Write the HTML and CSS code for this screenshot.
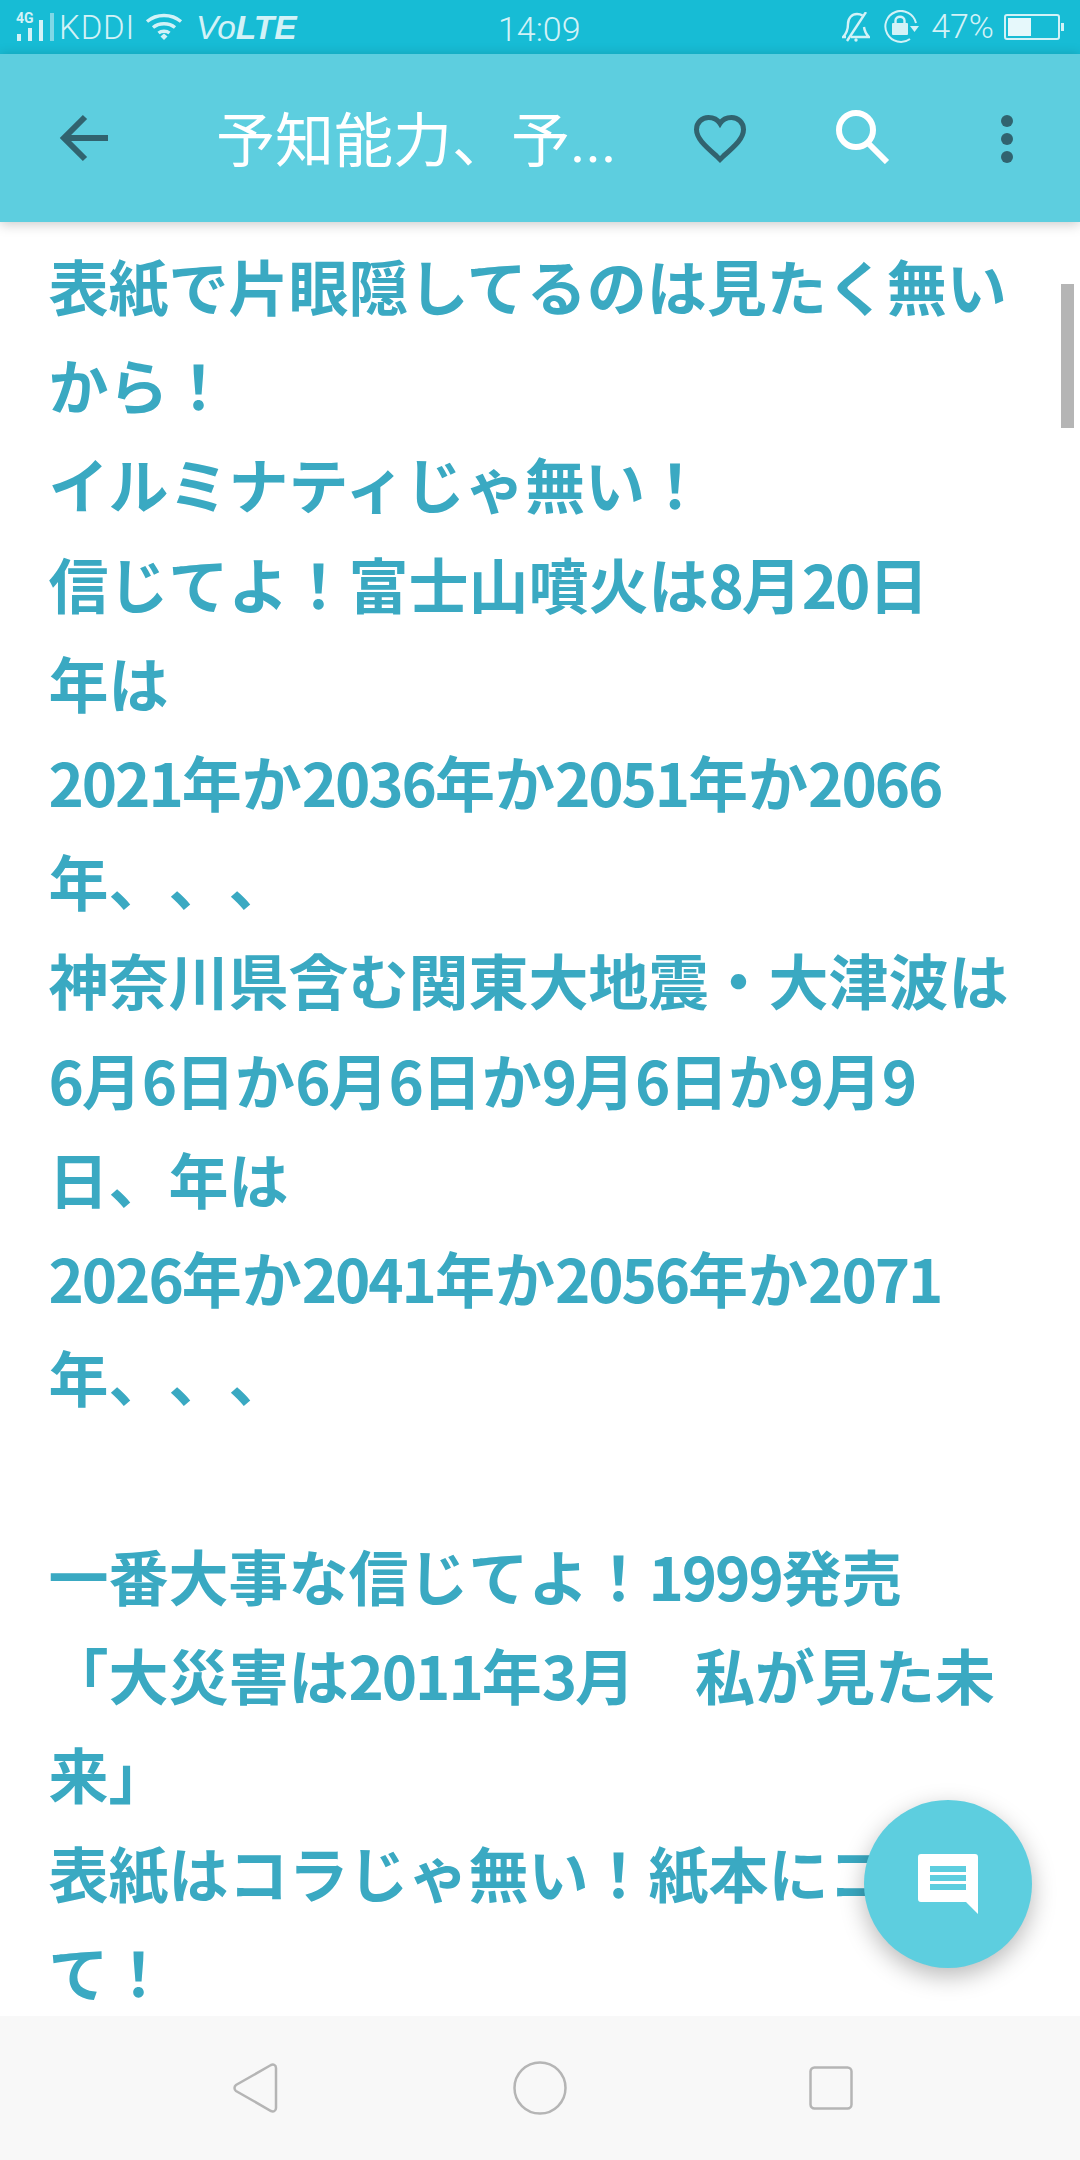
FILE: index.html
```html
<!DOCTYPE html>
<html lang="ja">
<head>
  <meta charset="UTF-8">
  <title>予知能力、予...</title>
  <link rel="stylesheet" href="styles.css">
</head>
<body>
  <div class="screen">
    <div class="status-bar">
      <div class="status-left">
        <div class="signal">
          <span class="signal-type">4G</span>
          <svg class="signal-bars" width="40" height="28" viewBox="0 0 40 28">
            <rect x="1" y="21" width="4" height="7" fill="#d3f2f7"/>
            <rect x="12" y="15" width="4" height="13" fill="#d3f2f7"/>
            <rect x="23" y="7" width="4" height="21" fill="#d3f2f7"/>
            <rect x="34" y="0" width="4" height="28" fill="#7fd8e6"/>
          </svg>
        </div>
        <span class="carrier">KDDI</span>
        <svg class="wifi" width="38" height="28" viewBox="0 0 38 28" fill="none" stroke="#d3f2f7" stroke-width="3.4">
          <path d="M2 8.5C11.5 .5 26.5 .5 36 8.5"/>
          <path d="M8 14.5C14 9.5 24 9.5 30 14.5"/>
          <path d="M13.5 20C16.5 17.6 21.5 17.6 24.5 20"/>
          <path d="M15.5 23.5L19 20.5L22.5 23.5L19 27Z" fill="#d3f2f7" stroke="none"/>
        </svg>
        <span class="volte">Vo<b>LTE</b></span>
      </div>
      <span class="clock">14:09</span>
      <div class="status-right">
        <svg class="bell" width="28" height="30" viewBox="0 0 28 30" fill="none" stroke="#d3f2f7" stroke-width="2.400">
          <path d="M9 25H27C24 22 22.500 19 22 15"/>
          <path d="M4 25H1C5 21 6 18 6 12C6 6 10 2 15 2C17 2 19 2.500 20.500 3.500"/>
          <path d="M24 0L5 29"/>
          <circle cx="14" cy="28" r="1.700" fill="#d3f2f7" stroke="none"/>
        </svg>
        <svg class="rotate-lock" width="36" height="34" viewBox="0 0 36 34" fill="none" stroke="#d3f2f7" stroke-width="2">
          <path d="M27 29A15.500 15.500 0 1 1 33 13"/>
          <path d="M27 16H36L31.500 22Z" fill="#d3f2f7" stroke="none"/>
          <rect x="9" y="13" width="16" height="12" rx="1" fill="#d3f2f7" stroke="none"/>
          <path d="M12.500 14V10.500C12.500 5.500 21.500 5.500 21.500 10.500V14" stroke-width="2.400"/>
        </svg>
        <span class="battery-text">47%</span>
        <div class="battery">
          <div class="battery-body"><div class="battery-level"></div></div>
          <div class="battery-tip"></div>
        </div>
      </div>
    </div>

    <header class="app-bar">
      <svg class="back-icon" width="50" height="48" viewBox="0 0 50 48" fill="none" stroke="#31636f" stroke-width="6">
        <path d="M49 24H5"/>
        <path d="M26 3L5 24L26 45"/>
      </svg>
      <h1 class="title">予知能力、予...</h1>
      <svg class="heart-icon" width="54" height="50" viewBox="0 0 54 50" fill="none" stroke="#31636f" stroke-width="5">
        <path d="M27 45.500L23.500 42C11 31 3.500 24 3.500 15.500C3.500 8.500 9 3.500 15.500 3.500C20 3.500 24.500 5.500 27 9.500C29.500 5.500 34 3.500 38.500 3.500C45 3.500 50.500 8.500 50.500 15.500C50.500 24 43 31 30.500 42Z"/>
      </svg>
      <svg class="search-icon" width="54" height="54" viewBox="0 0 54 54" fill="none" stroke="#fff" stroke-width="6">
        <circle cx="20" cy="20" r="17"/>
        <path d="M32 33L51 52"/>
      </svg>
      <div class="more-icon">
        <span class="dot"></span>
        <span class="dot"></span>
        <span class="dot"></span>
      </div>
    </header>

    <main class="content">
      <p class="post">表紙で片眼隠してるのは見たく無い<br>
      から！<br>
      イルミナティじゃ無い！<br>
      信じてよ！富士山噴火は<span class="num">8</span>月<span class="num">20</span>日<br>
      年は<br>
      <span class="num">2021</span>年か<span class="num">2036</span>年か<span class="num">2051</span>年か<span class="num">2066</span><br>
      年、、、<br>
      神奈川県含む関東大地震・大津波は<br>
      <span class="num">6</span>月<span class="num">6</span>日か<span class="num">6</span>月<span class="num">6</span>日か<span class="num">9</span>月<span class="num">6</span>日か<span class="num">9</span>月<span class="num">9</span><br>
      日、年は<br>
      <span class="num">2026</span>年か<span class="num">2041</span>年か<span class="num">2056</span>年か<span class="num">2071</span><br>
      年、、、</p>
      <p class="post">一番大事な信じてよ！<span class="num">1999</span>発売<br>
      「大災害は<span class="num">2011</span>年<span class="num">3</span>月　私が見た未<br>
      来」<br>
      表紙はコラじゃ無い！紙本にコピし<br>
      て！</p>
      <div class="scroll-thumb"></div>
      <button class="fab">
        <svg width="60" height="60" viewBox="0 0 60 60">
          <path d="M3 0H57A3 3 0 0 1 60 3V60L48 48H3A3 3 0 0 1 0 45V3A3 3 0 0 1 3 0Z" fill="#fff"/>
          <rect x="12" y="12" width="36" height="6" fill="#5dcedf"/>
          <rect x="12" y="21" width="36" height="6" fill="#5dcedf"/>
          <rect x="12" y="30" width="36" height="6" fill="#5dcedf"/>
        </svg>
      </button>
    </main>

    <nav class="nav-bar">
      <svg width="46" height="52" viewBox="0 0 46 52" fill="none" stroke="#b5b5b5" stroke-width="2.500">
        <path d="M39 3L4 23C2 24.500 2 27.500 4 29L39 49C41.500 50 44 49 44 46V6C44 3 41.500 2 39 3Z"/>
      </svg>
      <svg class="nav-home" width="54" height="54" viewBox="0 0 54 54" fill="none" stroke="#b5b5b5" stroke-width="2.500">
        <circle cx="27" cy="27" r="25.500"/>
      </svg>
      <svg class="nav-recent" width="44" height="44" viewBox="0 0 44 44" fill="none" stroke="#b5b5b5" stroke-width="2.500">
        <rect x="1.500" y="1.500" width="41" height="41" rx="4"/>
      </svg>
    </nav>
  </div>
</body>
</html>
```

FILE: styles.css
```css
html, body {
  margin: 0;
  padding: 0;
  background-color: #fff;
}
.screen {
  width: 1080px;
  height: 2160px;
  display: flex;
  flex-direction: column;
  overflow: hidden;
  font-family: Roboto, "Noto Sans CJK JP", sans-serif;
}

/* status bar */
.status-bar {
  height: 54px;
  flex-shrink: 0;
  display: flex;
  align-items: center;
  justify-content: space-between;
  padding: 0 16px 0 15px;
  background-color: #17bcd5;
  color: #d3f2f7;
  position: relative;
}
.status-left, .status-right {
  display: flex;
  align-items: center;
}
.signal {
  width: 38px;
  height: 40px;
  position: relative;
}
.signal-type {
  position: absolute;
  left: 1px;
  top: 4px;
  font-size: 14px;
  line-height: 15px;
  font-weight: 700;
}
.signal-bars {
  position: absolute;
  left: 1px;
  top: 6px;
}
.carrier {
  margin-left: 6px;
  font-size: 33px;
  font-weight: 300;
  letter-spacing: 0.8px;
}
.wifi {
  margin-left: 10px;
  margin-top: -1px;
}
.volte {
  margin-left: 13px;
  margin-top: 2px;
  font-family: "Liberation Sans", sans-serif;
  font-size: 33.500px;
  font-style: italic;
}
.volte b {
  font-weight: bold;
}
.clock {
  position: absolute;
  left: 498px;
  top: 9px;
  font-size: 34px;
  line-height: 40px;
  font-weight: 300;
}
.bell {
  margin-top: -1px;
}
.rotate-lock {
  margin-left: 13px;
}
.battery-text {
  margin-left: 12px;
  font-size: 34px;
  font-weight: 300;
  margin-top: -2px;
}
.battery {
  margin-left: 10px;
  display: flex;
  align-items: center;
}
.battery-body {
  box-sizing: border-box;
  width: 56px;
  height: 26px;
  padding: 2px;
  border: 2px solid #d3f2f7;
  border-radius: 3px;
}
.battery-level {
  width: 23px;
  height: 100%;
  background-color: #e6f8fb;
}
.battery-tip {
  width: 3px;
  height: 8px;
  margin-left: 1px;
  background-color: #d3f2f7;
}

/* app bar */
.app-bar {
  height: 168px;
  flex-shrink: 0;
  display: flex;
  align-items: center;
  padding-left: 59px;
  background-color: #5dcedf;
  box-shadow: 0 2px 12px rgba(0,0,0,0.22);
  position: relative;
  z-index: 2;
}
.title {
  width: 477px;
  margin: -4px 0 0 107px;
  font-size: 59px;
  font-weight: 400;
  color: #fff;
  white-space: nowrap;
}
.heart-icon {
  margin-top: 2px;
}
.search-icon {
  margin-left: 89px;
  margin-top: -3px;
}
.more-icon {
  margin-left: 111px;
  display: flex;
  flex-direction: column;
  gap: 6px;
  margin-top: 2px;
}
.dot {
  width: 12px;
  height: 12px;
  border-radius: 50%;
  background-color: #31636f;
}

/* post body */
.content {
  flex: 1;
  position: relative;
  overflow: hidden;
  padding-top: 13px;
}
.post {
  margin: 0 0 99.200px;
  padding-left: 48.500px;
  font-family: "Noto Sans CJK JP", sans-serif;
  font-size: 60px;
  line-height: 99.200px;
  font-weight: 700;
  color: #3aa9c2;
  white-space: nowrap;
  text-spacing-trim: space-all;
}
.num {
  letter-spacing: -2.100px;
}
.scroll-thumb {
  position: absolute;
  right: 6px;
  top: 62px;
  width: 13px;
  height: 144px;
  background-color: #b5b5b5;
}
.fab {
  position: absolute;
  left: 864px;
  top: 1578px;
  width: 168px;
  height: 168px;
  padding: 0;
  border: none;
  border-radius: 50%;
  background-color: #5dcedf;
  box-shadow: 0 8px 24px rgba(0,0,0,0.28);
  display: flex;
  align-items: center;
  justify-content: center;
}

/* navigation bar */
.nav-bar {
  height: 144px;
  flex-shrink: 0;
  display: flex;
  align-items: center;
  padding-left: 232px;
  background-color: #f8f8f8;
}
.nav-home {
  margin-left: 235px;
}
.nav-recent {
  margin-left: 242px;
}
```
